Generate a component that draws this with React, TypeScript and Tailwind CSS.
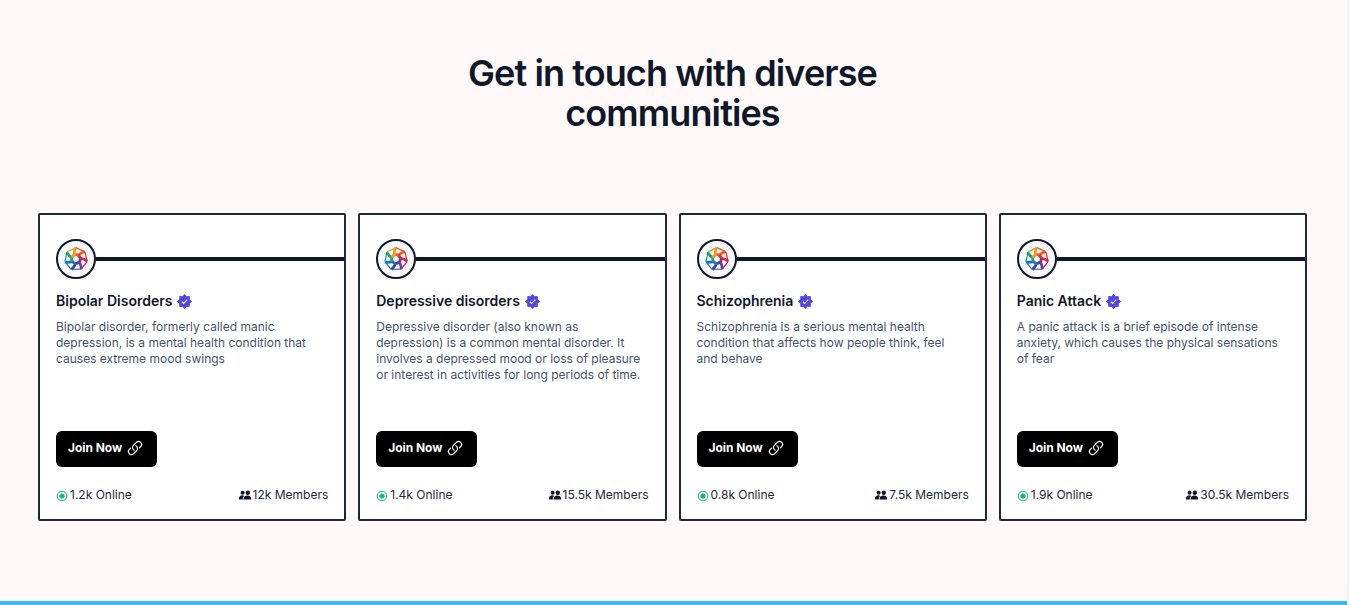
import { HiOutlineLink } from "react-icons/hi2";

const communities = [
  { name: "Bipolar Disorders", text: "Bipolar disorder, formerly called manic depression, is a mental health condition that causes extreme mood swings", online: "1.2k", members: "12k" },
  { name: "Depressive disorders", text: "Depressive disorder (also known as depression) is a common mental disorder. It involves a depressed mood or loss of pleasure or interest in activities for long periods of time.", online: "1.4k", members: "15.5k" },
  { name: "Schizophrenia", text: "Schizophrenia is a serious mental health condition that affects how people think, feel and behave", online: "0.8k", members: "7.5k" },
  { name: "Panic Attack", text: "A panic attack is a brief episode of intense anxiety, which causes the physical sensations of fear", online: "1.9k", members: "30.5k" },
];

const blades = ["#ee5a2c", "#dc2a3a", "#8a2f92", "#364da3", "#1d75b8", "#1f9c86", "#f59a22"];

function Logo() {
  return (
    <svg viewBox="-12 -12 24 24" className="size-6" fill="none">
      {blades.map((color, i) => (
        <g key={color} transform={`rotate(${(i * 360) / 7})`} stroke={color}>
          <path d="M0 -11.4 L8.9 -7.1" strokeWidth="1.2" />
          <path d="M8.6 -7.4 Q5 -6.6 2.4 -3.9 Q.6 -4.6 -1.6 -4" strokeWidth="2.8" />
        </g>
      ))}
    </svg>
  );
}

function VerifiedBadge() {
  return (
    <svg viewBox="0 0 16 16" className="mt-px ml-px size-[15px] shrink-0">
      <path
        d="M8 .5 10 2.8 13.1 2.6 13.2 5.8 15.5 8 13.2 10.2 13.1 13.3 10 13.2 8 15.5 6 13.2 2.9 13.3 2.8 10.2 .5 8 2.8 5.8 2.9 2.6 6 2.8Z"
        fill="#4f46e5"
        stroke="#4f46e5"
        strokeWidth="0.9"
        strokeLinejoin="round"
      />
      <path d="M5.2 8.3 7.1 10.1 10.9 6.1" fill="none" stroke="white" strokeWidth="1.25" />
    </svg>
  );
}

function OnlineIcon() {
  return (
    <svg viewBox="0 0 12 12" className="mt-0.5 size-3">
      <circle cx="6" cy="6" r="4.8" fill="none" stroke="#10b981" strokeWidth="1" />
      <circle cx="6" cy="6" r="2.6" fill="#10b981" />
    </svg>
  );
}

function MembersIcon() {
  return (
    <svg viewBox="0 0 12 10" className="h-[10px] w-3" fill="#0f172a">
      <circle cx="3.6" cy="2.7" r="2" />
      <circle cx="8.8" cy="2.7" r="2.2" />
      <path d="M0 9.5V7.8Q.3 5.6 3 5.3 4.8 5.3 5.1 5.9 3.9 6.7 3.8 8V9.5Z" />
      <path d="M4.6 9.5V8.1Q5 5.4 8.4 5.4 11.6 5.4 12 8.1V9.5Z" />
    </svg>
  );
}

function Card({ item }: { item: (typeof communities)[number] }) {
  return (
    <article className="flex h-[308px] flex-col rounded-xs border-2 border-[#1e293b] bg-white pt-6 text-[#0f172a]">
      <div className="flex items-center pl-4">
        <div className="flex size-10 items-center justify-center rounded-full border-2 border-[#0f172a] bg-[#f8fafc]">
          <Logo />
        </div>
        <div className="h-1 flex-1 bg-[#0f172a]" />
      </div>
      <div className="flex flex-1 flex-col px-4 pb-4">
        <h2 className="mt-3 flex items-center gap-1 text-sm font-semibold">
          {item.name}
          <VerifiedBadge />
        </h2>
        <p className="mt-2 text-xs text-[#475569]">{item.text}</p>
        <button className="mt-auto flex h-9 w-[101px] items-center gap-[5px] rounded-md bg-black px-3 pb-0.5 text-xs font-bold tracking-[-0.05px] text-white">
          Join Now
          <HiOutlineLink className="size-4 shrink-0 [&_path]:[stroke-width:1.8]" />
        </button>
        <div className="mt-5 flex h-4 items-center justify-between text-xs text-[#1e293b]">
          <span className="flex items-center gap-0.5">
            <OnlineIcon />
            {item.online} Online
          </span>
          <span className="flex items-center gap-0.5">
            <MembersIcon />
            {item.members} Members
          </span>
        </div>
      </div>
    </article>
  );
}

export default function App() {
  return (
    <div className="flex h-[605px] bg-[#f1f1f1] font-['Inter',sans-serif]">
      <main className="flex w-[1347px] flex-col border-b-4 border-[#3db9ee] bg-[#fff9f9] pt-[53px] pr-10 pl-[38px]">
        <h1 className="mx-auto w-[448px] text-center text-4xl leading-10 font-semibold tracking-tight text-[#0f172a]">
          Get in touch with diverse communities
        </h1>
        <section className="mt-20 grid grid-cols-4 gap-3">
          {communities.map((item) => (
            <Card key={item.name} item={item} />
          ))}
        </section>
      </main>
    </div>
  );
}
